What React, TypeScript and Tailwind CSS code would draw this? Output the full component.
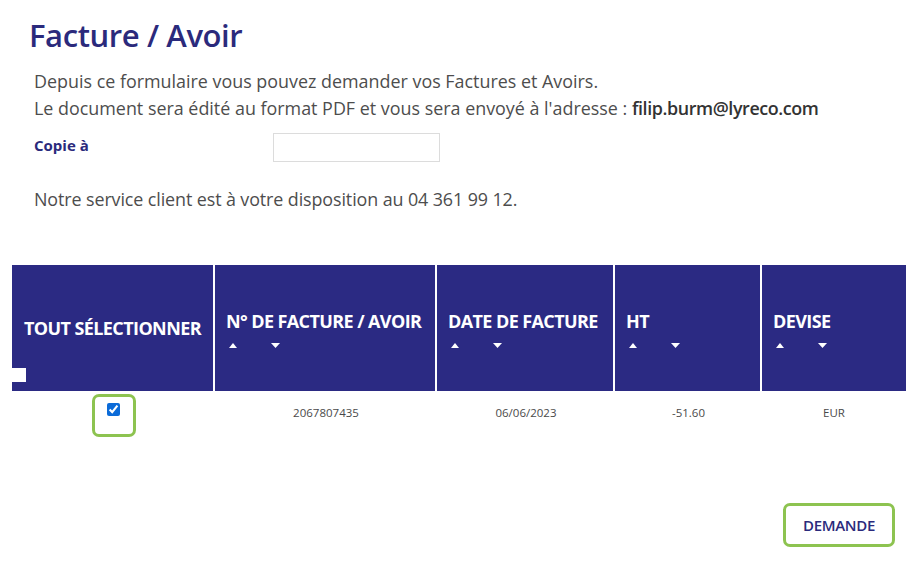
import { useState } from "react";

const navy = "text-[#2b2a7c]";

function SortArrows() {
  return (
    <div className="mt-[11px] flex items-center gap-[34px] pl-[3px]">
      <svg width="8" height="5" viewBox="0 0 8 5">
        <path d="M0 5 L4 0 L8 5 Z" fill="white" />
      </svg>
      <svg width="9" height="5" viewBox="0 0 9 5">
        <path d="M0 0 L9 0 L4.5 5 Z" fill="white" />
      </svg>
    </div>
  );
}

export default function App() {
  const [checked, setChecked] = useState(true);
  const [all, setAll] = useState(false);

  const columns = [
    { label: "N° DE FACTURE / AVOIR", width: "w-[222px]" },
    { label: "DATE DE FACTURE", width: "w-[178px]" },
    { label: "HT", width: "w-[147px]" },
    { label: "DEVISE", width: "flex-1" },
  ];

  return (
    <div className="w-[908px] h-[564px] bg-white font-['Open_Sans',sans-serif] text-[#4d4d4d] overflow-hidden">
      <h1 className={`pl-[29px] pt-[14px] text-[31px] leading-[42px] font-semibold tracking-[-0.4px] ${navy}`}>
        Facture / Avoir
      </h1>

      <div className="pl-[34px] pt-[12px] text-[17.9px] leading-[27px]">
        <p>Depuis ce formulaire vous pouvez demander vos Factures et Avoirs.</p>
        <p>
          Le document sera édité au format PDF et vous sera envoyé à l'adresse :{" "}
          <span className="font-semibold tracking-[-0.4px] text-[#333]">filip.burm@lyreco.com</span>
        </p>

        <div className="mt-[11px] flex items-start">
          <label className={`w-[239px] pt-[3px] text-[15px] leading-[18px] font-bold ${navy}`}>
            Copie à
          </label>
          <input
            type="text"
            className="h-[29px] w-[167px] border border-[#dcdcdc] bg-white outline-none"
          />
        </div>

        <p className="mt-[24px] tracking-[-0.1px]">
          Notre service client est à votre disposition au 04 361 99 12.
        </p>
      </div>

      <div className="mt-[52px] ml-[12px] mr-[2px]">
        <div className="flex h-[126px] bg-[#2b2a83] text-white">
          <div className="relative flex w-[203px] items-center justify-center border-r-2 border-white">
            <span className="text-[18px] font-bold tracking-[-0.6px]">TOUT SÉLECTIONNER</span>
            <button
              onClick={() => setAll(!all)}
              className="absolute bottom-[9px] left-0 h-[14px] w-[14px] bg-white"
              aria-label="Tout sélectionner"
            />
          </div>
          {columns.map((c, i) => (
            <div
              key={c.label}
              className={`${c.width} flex flex-col justify-center pl-[11px] pt-[2px] ${
                i < columns.length - 1 ? "border-r-2 border-white" : ""
              }`}
            >
              <span className="text-[18px] leading-[22px] font-bold tracking-[-0.6px]">{c.label}</span>
              <SortArrows />
            </div>
          ))}
        </div>

        <div className="flex h-[46px] items-center text-[11.5px] text-[#4a4a4a]">
          <div className="flex w-[203px] justify-center">
            <div className="flex h-[43px] w-[44px] items-center justify-center rounded-[7px] border-[3px] border-[#8dc350] mt-[2px]">
              <input
                type="checkbox"
                checked={checked}
                onChange={() => setChecked(!checked)}
                className="h-[13px] w-[13px] -mt-[12px] accent-[#0b6bd8]"
              />
            </div>
          </div>
          <div className="w-[222px] text-center -mt-[2px]">2067807435</div>
          <div className="w-[178px] text-center -mt-[2px]">06/06/2023</div>
          <div className="w-[147px] text-center -mt-[2px]">-51.60</div>
          <div className="flex-1 text-center -mt-[2px]">EUR</div>
        </div>

        <div className="mt-[66px] flex justify-end pr-[11px]">
          <button
            className={`h-[44px] w-[112px] rounded-[7px] border-[3px] border-[#8dc350] bg-white text-[15px] font-semibold tracking-[-0.3px] ${navy}`}
          >
            DEMANDE
          </button>
        </div>
      </div>
    </div>
  );
}
